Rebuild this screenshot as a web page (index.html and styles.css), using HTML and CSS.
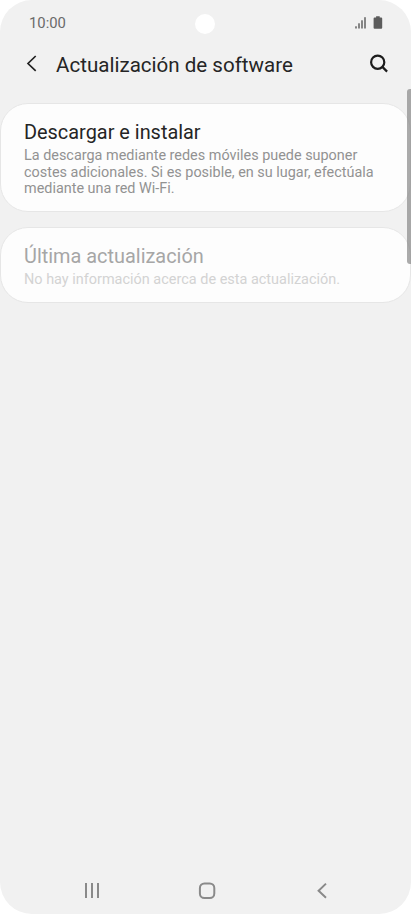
FILE: index.html
```html
<!DOCTYPE html>
<html lang="es">
<head>
  <meta charset="utf-8">
  <meta name="viewport" content="width=device-width, initial-scale=1"/>
  <title>Actualización de software</title>
  <link rel="stylesheet" href="styles.css">
</head>
<body>
<div class="screen">
  <div class="status-bar">
    <span class="time">10:00</span>
    <svg class="status-icons" width="28" height="14" viewBox="0 0 28 14">
      <g fill="#858585">
        <rect x="0" y="10.3" width="2" height="2.2"/>
        <rect x="3" y="7.3" width="2" height="5.2"/>
        <rect x="6" y="4.3" width="2" height="8.2"/>
        <rect x="9" y="1.2" width="2" height="11.3"/>
      </g>
      <path d="M21.1 .3h3.6v1.3h1.5q1 0 1 1v9.2q0 1-1 1h-6.6q-1 0-1-1v-9.2q0-1 1-1h1.5z" fill="#5c5c5c"/>
    </svg>
    <span class="camera"></span>
  </div>

  <header class="app-bar">
    <svg class="back" width="12" height="18" viewBox="0 0 12 18">
      <path d="M9.7 1L2 8.5l7.7 7.4" fill="none" stroke="#222" stroke-width="1.7"/>
    </svg>
    <h1>Actualización de software</h1>
    <svg class="search" width="20" height="20" viewBox="0 0 20 20">
      <g fill="none" stroke="#1c1c1c" stroke-width="2.2">
        <circle cx="8.7" cy="8.2" r="6.6"/>
        <path d="M13.4 12.9l4.7 4.7"/>
      </g>
    </svg>
  </header>

  <main class="list">
    <section class="card">
      <h2>Descargar e instalar</h2>
      <p>La descarga mediante redes móviles puede suponer<br>
        costes adicionales. Si es posible, en su lugar, efectúala<br>
        mediante una red Wi-Fi.</p>
    </section>
    <section class="card disabled">
      <h2>Última actualización</h2>
      <p>No hay información acerca de esta actualización.</p>
    </section>
  </main>

  <nav class="nav-bar">
    <svg width="18" height="18" viewBox="0 0 18 18">
      <path d="M3 1v15M9 1v15M15 1v15" fill="none" stroke="#8a8a8a" stroke-width="2"/>
    </svg>
    <svg width="18" height="18" viewBox="0 0 18 18">
      <rect x="1.9" y="1.4" width="14.4" height="14.6" rx="4.5" fill="none" stroke="#8a8a8a" stroke-width="2"/>
    </svg>
    <svg width="18" height="18" viewBox="0 0 18 18">
      <path d="M13 1.6L5.6 8.7l7.4 7" fill="none" stroke="#8a8a8a" stroke-width="2"/>
    </svg>
  </nav>

  <div class="scrollbar"></div>
</div>
</body>
</html>
```

FILE: styles.css
```css
body {
  margin: 0;
  background: #fff;
  font-family: Roboto, sans-serif;
}

h1,
h2,
p {
  margin: 0;
  font-weight: 400;
  white-space: nowrap;
}

svg {
  display: block;
}

.screen {
  position: relative;
  display: flex;
  flex-direction: column;
  height: 914px;
  overflow: hidden;
  border-radius: 32px;
  background: #f1f1f1;
}

.status-bar {
  display: flex;
  align-items: center;
  justify-content: space-between;
  height: 46px;
  padding: 0 28px 0 29px;
  box-sizing: border-box;
}

.time {
  font-size: 14.8px;
  color: #6a6a6a;
}

.camera {
  position: absolute;
  top: 14px;
  left: 195px;
  width: 20px;
  height: 20px;
  border-radius: 50%;
  background: #fff;
}

.app-bar {
  display: flex;
  align-items: center;
  height: 36px;
  padding: 0 22px 0 26px;
}

.app-bar h1 {
  flex: 1;
  margin-left: 18px;
  padding-top: 1px;
  font-size: 20.57px;
  color: #252525;
}

.list {
  flex: 1;
  padding-top: 21px;
}

.card {
  height: 108.5px;
  margin-bottom: 15.5px;
  padding: 17px 23px 0;
  box-sizing: border-box;
  border: 1px solid #e6e6e6;
  border-radius: 28px;
  background: #fdfdfd;
}

.card h2 {
  font-size: 19.9px;
  line-height: 24px;
  color: #252525;
}

.card p {
  margin-top: 3px;
  font-size: 14.42px;
  line-height: 16.5px;
  color: #929292;
}

.card.disabled {
  height: 76px;
}

.disabled h2 {
  color: #a6a6a6;
}

.disabled p {
  font-size: 14.46px;
  color: #d3d3d3;
}

.nav-bar {
  display: flex;
  justify-content: space-between;
  align-items: center;
  height: 46px;
  padding: 0 80px 0 83px;
}

.scrollbar {
  position: absolute;
  top: 89px;
  right: 0;
  width: 4px;
  height: 175px;
  border-radius: 3px 0 0 3px;
  background: rgba(130, 130, 130, .67);
}
```
